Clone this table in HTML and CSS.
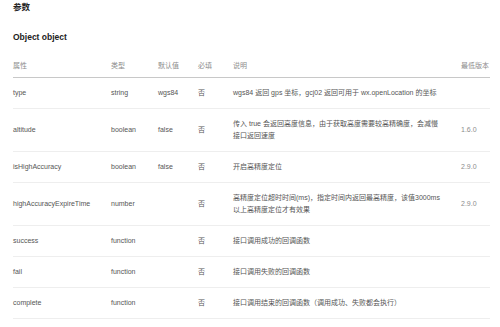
FILE: index.html
```html
<!DOCTYPE html>
<html lang="zh-CN">
<head>
<meta charset="utf-8">
<title>参数</title>
<link rel="stylesheet" href="styles.css">
</head>
<body>
<div class="page">
  <h2 class="title">参数</h2>
  <h3 class="subtitle">Object object</h3>
  <table class="params">
    <colgroup>
      <col class="c-name"><col class="c-type"><col class="c-def"><col class="c-req"><col class="c-desc"><col class="c-ver">
    </colgroup>
    <thead>
      <tr><th>属性</th><th>类型</th><th>默认值</th><th>必填</th><th>说明</th><th>最低版本</th></tr>
    </thead>
    <tbody>
      <tr><td>type</td><td>string</td><td>wgs84</td><td>否</td><td>wgs84 返回 gps 坐标，gcj02 返回可用于 wx.openLocation 的坐标</td><td class="ver"></td></tr>
      <tr><td>altitude</td><td>boolean</td><td>false</td><td>否</td><td>传入 true 会返回高度信息，由于获取高度需要较高精确度，会减慢<br>接口返回速度</td><td class="ver">1.6.0</td></tr>
      <tr><td>isHighAccuracy</td><td>boolean</td><td>false</td><td>否</td><td>开启高精度定位</td><td class="ver">2.9.0</td></tr>
      <tr><td>highAccuracyExpireTime</td><td>number</td><td></td><td>否</td><td>高精度定位超时时间(ms)，指定时间内返回最高精度，该值3000ms<br>以上高精度定位才有效果</td><td class="ver">2.9.0</td></tr>
      <tr><td>success</td><td>function</td><td></td><td>否</td><td>接口调用成功的回调函数</td><td class="ver"></td></tr>
      <tr><td>fail</td><td>function</td><td></td><td>否</td><td>接口调用失败的回调函数</td><td class="ver"></td></tr>
      <tr><td>complete</td><td>function</td><td></td><td>否</td><td>接口调用结束的回调函数（调用成功、失败都会执行）</td><td class="ver"></td></tr>
    </tbody>
  </table>
</div>
</body>
</html>
```
FILE: styles.css
```css
html, body {
  margin: 0;
  padding: 0;
  background: #ffffff;
}
body {
  font-family: "Liberation Sans", "Noto Sans CJK SC", sans-serif;
  color: #555;
}
.page {
  padding: 2px 10px 0 13px;
  width: 477px;
}
.title {
  margin: 0;
  font-size: 8.5px;
  line-height: 11px;
  font-weight: 700;
  color: #222;
}
.subtitle {
  margin: 18.5px 0 0 0;
  font-size: 8.5px;
  line-height: 11px;
  font-weight: 700;
  color: #222;
}
.params {
  margin-top: 12px;
  width: 477px;
  border-collapse: collapse;
  table-layout: fixed;
  font-size: 7px;
  line-height: 12px;
}
.c-name { width: 98px; }
.c-type { width: 47px; }
.c-def { width: 40px; }
.c-req { width: 35px; }
.c-desc { width: 228px; }
.c-ver { width: 29px; }
.params th {
  text-align: left;
  font-weight: 400;
  color: #8c8c8c;
  padding: 5px 0 5.5px 0;
  border-bottom: 1px solid #c8c8c8;
  white-space: nowrap;
}
.params td {
  padding: 9px 0;
  border-bottom: 1px solid #eeeeee;
  vertical-align: middle;
  white-space: nowrap;
}
.params td.ver {
  color: #8c8c8c;
}
```
